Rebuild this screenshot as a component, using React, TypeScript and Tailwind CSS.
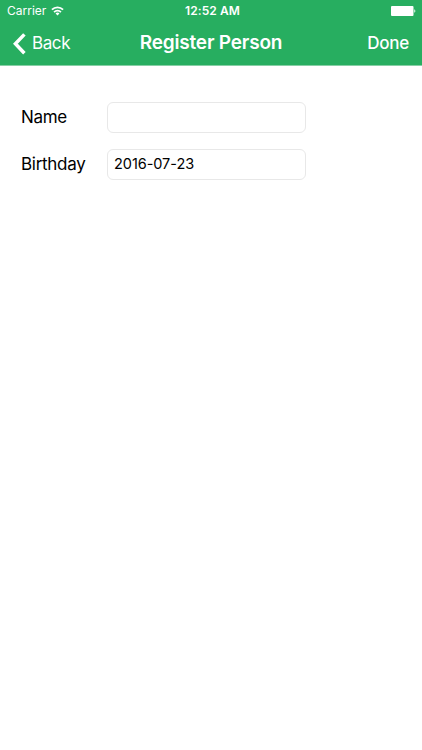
const StatusBar = () => (
  <div className="grid h-[22px] grid-cols-3 items-center pl-[7px] pr-[6px]">
    <div className="flex items-center gap-[5px] text-[12px] leading-none">
      <span>Carrier</span>
      <svg width="13" height="10" viewBox="0 0 14 10" fill="none" stroke="currentColor" strokeWidth="1.9">
        <path d="M1 3.6a8.5 8.5 0 0 1 12 0" />
        <path d="M3.3 6.1a5.2 5.2 0 0 1 7.4 0" />
        <path d="M7 9.8 4.9 7.7a2.9 2.9 0 0 1 4.2 0z" fill="currentColor" stroke="none" />
      </svg>
    </div>
    <span className="pl-[2px] text-center text-[12px] font-semibold leading-none tracking-[0.1px]">12:52 AM</span>
    <div className="flex justify-end">
      <svg width="25" height="10" viewBox="0 0 25 10" fill="currentColor">
        <rect width="22.5" height="10" rx="1" />
        <path d="M23.3 3.3a1.9 1.9 0 0 1 0 3.4z" />
      </svg>
    </div>
  </div>
)

const NavBar = () => (
  <div className="grid h-[43px] grid-cols-[1fr_auto_1fr] items-center px-[13px]">
    <button className="flex items-center gap-[6px] text-[17px] leading-none tracking-[-0.4px]">
      <svg width="13" height="22" viewBox="0 0 13 22" fill="none" stroke="currentColor" strokeWidth="3.5">
        <path d="M11.4 1.4 2.4 10.8l9 9.4" />
      </svg>
      <span className="pb-px">Back</span>
    </button>
    <h1 className="pb-[2px] text-[19px] font-semibold leading-none tracking-[-0.18px]">Register Person</h1>
    <button className="pb-px text-right text-[17px] font-medium leading-none tracking-[-0.25px]">Done</button>
  </div>
)

const Field = ({ label, value }: { label: string; value: string }) => (
  <label className="flex h-[31px] items-center">
    <span className="w-[86px] text-[17px] leading-none tracking-[-0.3px]">{label}</span>
    <input
      className="h-[31px] w-[199px] rounded-[6px] border border-[#e8e8e8] px-[6px] pb-[2px] text-[14.5px] tracking-[-0.05px] outline-none"
      defaultValue={value}
    />
  </label>
)

const App = () => {
  return (
    <div className="min-h-screen w-full bg-white font-['Inter',sans-serif] text-black">
      <header className="h-[66px] border-b border-[#86cfa5] bg-[#27ae60] text-white">
        <StatusBar />
        <NavBar />
      </header>
      <main className="flex flex-col gap-[16px] px-[21px] pt-[36px]">
        <Field label="Name" value="" />
        <Field label="Birthday" value="2016-07-23" />
      </main>
    </div>
  )
}

export default App
